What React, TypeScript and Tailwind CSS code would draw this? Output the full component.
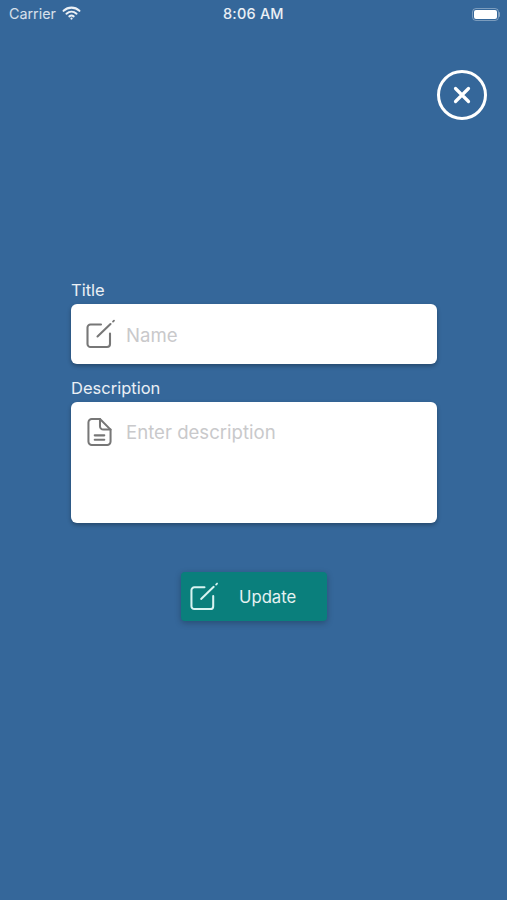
const font = { fontFamily: 'Inter, "Noto Sans", sans-serif' };

function EditIcon({ className }: { className: string }) {
  return (
    <svg viewBox="0 0 30 30" fill="none" stroke="currentColor" strokeLinecap="round" strokeLinejoin="round" className={className}>
      <path d="M15 5.500H4.500a3 3 0 0 0-3 3V25a3 3 0 0 0 3 3H21a3 3 0 0 0 3-3V14.500" strokeWidth="2.100" />
      <path d="M11.500 17.500 24.500 5" strokeWidth="2.100" />
      <path d="M27 2.600 28 1.600" strokeWidth="1.800" />
    </svg>
  );
}

function DocIcon({ className }: { className: string }) {
  return (
    <svg viewBox="0 0 26 30" fill="none" stroke="currentColor" strokeWidth="2.100" strokeLinecap="round" strokeLinejoin="round" className={className}>
      <path d="M13.500 1.500H5a3.500 3.500 0 0 0-3.500 3.500v20A3.500 3.500 0 0 0 5 28.500h16a3.500 3.500 0 0 0 3.500-3.500V12.500z" />
      <path d="M13.500 1.500v7.500a3.500 3.500 0 0 0 3.500 3.500h7.500" />
      <path d="M8 18.500h10M8 23h10" />
    </svg>
  );
}

export default function App() {
  return (
    <div className="flex h-[900px] w-[507px] flex-col overflow-hidden bg-[#35679a]" style={font}>
      {/* status bar */}
      <div className="relative flex h-[28px] items-center justify-between pl-[9px] pr-[7px] text-white/90">
        <div className="flex items-center gap-[6px]">
          <span className="text-[14.300px] leading-none text-white/80">Carrier</span>
          <svg viewBox="0 0 20 15" className="mb-[3px] h-[14px] w-[19px]" fill="none" stroke="currentColor" strokeLinecap="round">
            <path d="M1.500 5.200C6.500.6 13.500.6 18.500 5.200" strokeWidth="2.200" />
            <path d="M4.600 8.200c3.200-2.800 7.600-2.800 10.800 0" strokeWidth="2.200" />
            <path d="M7.700 11.100c1.400-1.100 3.200-1.100 4.600 0" strokeWidth="2.200" />
            <circle cx="10" cy="13.500" r="1.200" fill="currentColor" stroke="none" />
          </svg>
        </div>
        <span className="absolute left-[223px] top-[5px] text-[14.500px] font-medium leading-[18px] tracking-[0.2px]">8:06 AM</span>
        <div className="flex items-center">
          <div className="flex h-[13px] w-[27px] items-center rounded-[4px] border border-white/35 p-[1px]">
            <div className="h-full w-full rounded-[2px] bg-white" />
          </div>
          <div className="h-[5px] w-[1.500px] rounded-r bg-white/40" />
        </div>
      </div>

      {/* close */}
      <div className="mt-[42px] flex justify-end pr-[20px]">
        <div className="flex h-[50px] w-[50px] items-center justify-center rounded-full border-[3px] border-white">
          <svg viewBox="0 0 20 20" className="h-[20px] w-[20px]" stroke="white" strokeWidth="3.200" strokeLinecap="round">
            <path d="M3.500 3.500 16.500 16.500M16.500 3.500 3.500 16.500" />
          </svg>
        </div>
      </div>

      {/* form */}
      <div className="mt-[159px] flex flex-col pl-[71px] pr-[70px]">
        <label className="h-[25px] text-[16.500px] leading-[22px] text-white/90">Title</label>
        <div className="flex h-[60px] items-center rounded-[6px] bg-white pl-[15px] shadow-[0_2px_4px_rgba(0,0,0,0.3)]">
          <EditIcon className="h-[30px] w-[30px] shrink-0 text-[#777777]" />
          <span className="ml-[10px] mt-[3px] text-[18.600px] text-[#c9c9cb]">Name</span>
        </div>
        <label className="mt-[13px] h-[25px] text-[16.500px] leading-[22px] text-white/90">Description</label>
        <div className="flex h-[121px] items-start rounded-[6px] bg-white pl-[15px] pt-[15px] shadow-[0_2px_4px_rgba(0,0,0,0.3)]">
          <DocIcon className="ml-[1px] h-[30px] w-[25px] shrink-0 text-[#777777]" />
          <span className="ml-[14px] text-[18.600px] leading-[30px] text-[#c9c9cb]">Enter description</span>
        </div>
        <div className="mt-[49px] flex justify-center">
          <div className="flex h-[49px] w-[146px] items-center rounded-[4px] bg-[#0a7f7c] pl-[9px] shadow-[0_2px_6px_rgba(0,0,0,0.25)]">
            <EditIcon className="h-[29px] w-[29px] shrink-0 text-[#d8f3f1]" />
            <span className="ml-[20px] mt-[2px] text-[16.700px] text-white/90">Update</span>
          </div>
        </div>
      </div>
    </div>
  );
}
